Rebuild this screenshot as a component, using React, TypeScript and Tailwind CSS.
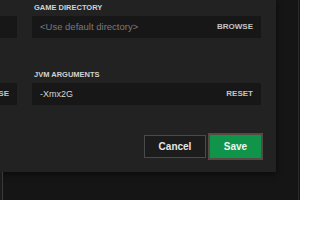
import React from 'react'

interface Field {
  label: string
  value: string
  placeholder?: boolean
  action?: string
}

const leftFields: Field[] = [
  { label: '', value: '' },
  { label: '', value: '', action: 'BROWSE' },
]

const rightFields: Field[] = [
  { label: 'GAME DIRECTORY', value: '<Use default directory>', placeholder: true, action: 'BROWSE' },
  { label: 'JVM ARGUMENTS', value: '-Xmx2G', action: 'RESET' },
]

function FieldColumn({ fields, className }: { fields: Field[]; className?: string }) {
  return (
    <div className={`flex flex-col shrink-0 ${className ?? ''}`}>
      {fields.map((f, i) => (
        <div key={i} className={i === 0 ? '' : 'mt-[32px]'}>
          <p className="h-[10px] pl-[2px] text-[7.5px] leading-[10px] font-bold text-[#d2d2d2] whitespace-nowrap">
            {f.label}
          </p>
          <div className="mt-[3px] h-[22px] bg-[#171717] flex items-center justify-between px-[8px]">
            <span
              className={`leading-none whitespace-nowrap ${
                f.placeholder ? 'text-[9.5px] text-[#7a7a7a]' : 'text-[9px] text-[#d6d6d6]'
              }`}
            >
              {f.value}
            </span>
            {f.action && (
              <span className="text-[8px] leading-none font-bold text-[#c4c4c4]">{f.action}</span>
            )}
          </div>
        </div>
      ))}
    </div>
  )
}

export default function App() {
  return (
    <div className="w-[300px] h-[200px] bg-[#151515] flex overflow-hidden font-['Liberation_Sans',Arial,sans-serif]">
      <div className="w-[276px] shrink-0 flex flex-col">
        {/* Settings panel */}
        <div className="h-[172px] shrink-0 bg-[#222222] shadow-[0_2px_6px_rgba(0,0,0,0.55)] overflow-hidden flex flex-col">
          <div className="flex gap-[15px] pt-[3px] -ml-[183px]">
            <FieldColumn fields={leftFields} className="w-[200px]" />
            <FieldColumn fields={rightFields} className="w-[229px]" />
          </div>

          <div className="flex justify-end gap-[4px] pr-[15px] mt-[30px]">
            <button className="w-[62px] h-[23px] border border-[#4a4a4a] bg-[#1c1c1c] text-[10px] font-bold text-[#e6e6e6]">
              Cancel
            </button>
            <button className="w-[51px] h-[23px] bg-[#10944a] ring-2 ring-[#564a44] text-[10px] font-bold text-[#eef5ef]">
              Save
            </button>
          </div>
        </div>

        {/* window behind */}
        <div className="flex-1 flex">
          <div className="w-[2px] bg-[#1b1b1b]" />
          <div className="w-px bg-[#3a3a3a]" />
        </div>
      </div>

      <div className="flex-1" />
      <div className="w-px shrink-0 bg-[#2a2a2a]" />
      <div className="w-px shrink-0" />
    </div>
  )
}
